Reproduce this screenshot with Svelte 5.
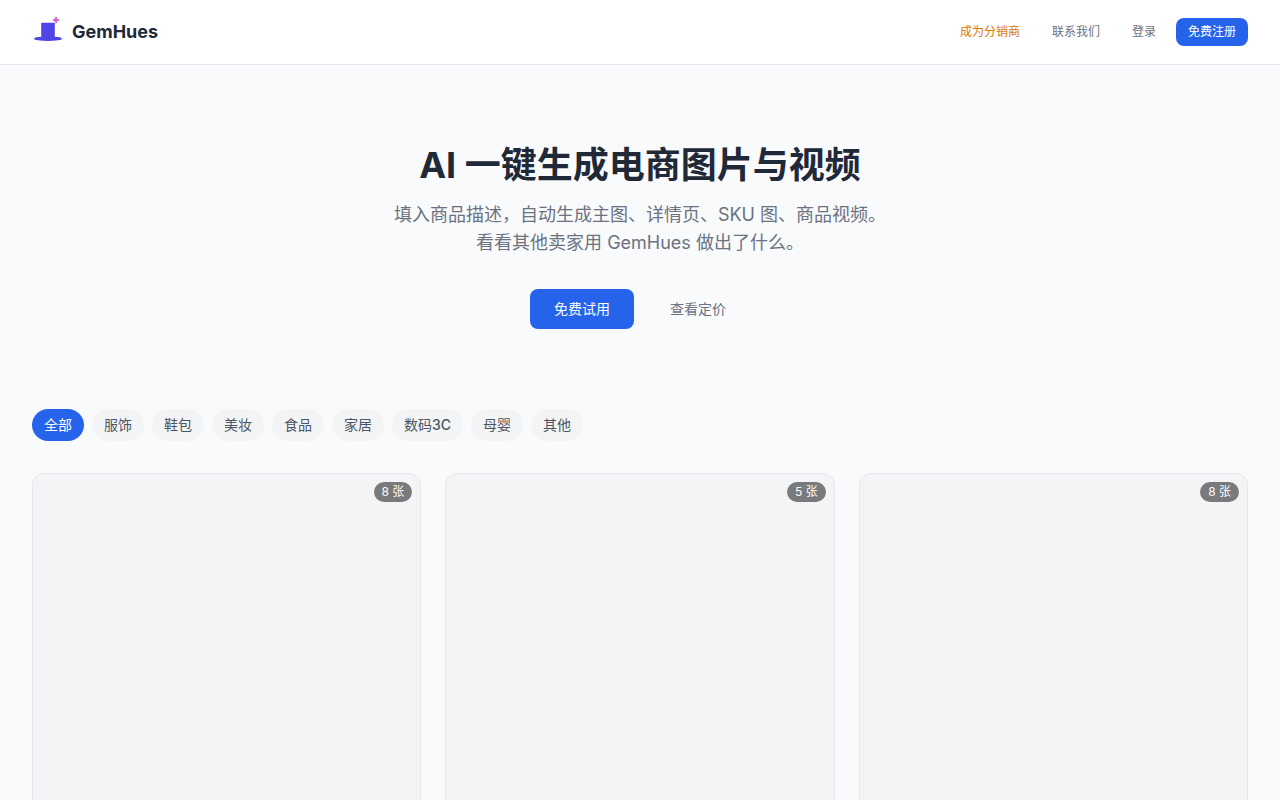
<script>
  const categories = [
    { name: '全部' },
    { name: '服饰' },
    { name: '鞋包' },
    { name: '美妆' },
    { name: '食品' },
    { name: '家居' },
    { name: '数码', suffix: '3C' },
    { name: '母婴' },
    { name: '其他' }
  ];
  const works = [8, 5, 8];
  let active = $state('全部');
</script>

<header class="bar">
  <a class="brand" href="#home">
    <svg class="logo" viewBox="0 0 32 32" aria-hidden="true">
      <ellipse cx="16" cy="22.7" rx="14" ry="2.3" fill="#4f46e5" />
      <rect x="9.2" y="6.8" width="13.6" height="16" rx="0.5" fill="#4f46e5" />
      <path d="M24 .8l.9 2.3 2.3.9-2.3.9-.9 2.3-.9-2.3-2.3-.9 2.3-.9z" fill="#d65fd0" stroke="#d65fd0" stroke-width=".9" stroke-linejoin="round" />
    </svg>
    <span>GemHues</span>
  </a>
  <nav class="nav">
    <a class="partner" href="#partner">成为分销商</a>
    <a href="#contact">联系我们</a>
    <a href="#login">登录</a>
    <a class="primary" href="#register">免费注册</a>
  </nav>
</header>

<main>
  <section class="hero">
    <h1>AI 一键生成电商图片与视频</h1>
    <p>填入商品描述，自动生成主图、详情页、SKU 图、商品视频。<br />看看其他卖家用 GemHues 做出了什么。</p>
    <div class="actions">
      <a class="primary" href="#try">免费试用</a>
      <a href="#pricing">查看定价</a>
    </div>
  </section>

  <section class="gallery">
    <div class="chips">
      {#each categories as { name, suffix }}
        <button type="button" class:active={active === name} aria-pressed={active === name} onclick={() => (active = name)}>{name}{#if suffix}<span class="suffix">{suffix}</span>{/if}</button>
      {/each}
    </div>
    <div class="grid">
      {#each works as count}
        <article class="card">
          <span class="count">{count} 张</span>
        </article>
      {/each}
    </div>
  </section>
</main>

<style>
  :global(body) {
    background: #f9fafc;
    color: #1f2937;
    font-family: Inter, "Noto Sans CJK SC", sans-serif;
    font-size: 14px;
    line-height: 20px;
  }
  a {
    color: #6b7280;
    text-decoration: none;
  }
  .bar {
    display: flex;
    align-items: center;
    justify-content: space-between;
    height: 64px;
    padding: 0 32px;
    background: #fff;
    border-bottom: 1px solid #e5e7eb;
  }
  .brand {
    display: flex;
    align-items: center;
    gap: 8px;
    color: #1f2937;
    font-size: 18px;
    font-weight: 700;
    line-height: 28px;
  }
  .logo {
    width: 32px;
    height: 32px;
  }
  .nav {
    display: flex;
    gap: 8px;
  }
  .nav a {
    padding: 6px 12px;
    border-radius: 8px;
    font-size: 12px;
    line-height: 16px;
  }
  .nav .partner {
    color: #d97706;
  }
  .nav .primary,
  .actions .primary {
    background: #2563eb;
    color: #fff;
  }
  .hero {
    padding: 80px 32px;
    text-align: center;
  }
  h1 {
    margin: 0 0 16px;
    font-size: 36px;
    font-weight: 700;
    line-height: 40px;
  }
  p {
    margin: 0 0 32px;
    color: #6b7280;
    font-size: 18px;
    line-height: 28px;
  }
  .actions {
    display: flex;
    justify-content: center;
    gap: 12px;
  }
  .actions a {
    padding: 10px 24px;
    border-radius: 8px;
  }
  .gallery {
    padding: 0 32px 32px;
  }
  .chips {
    display: flex;
    flex-wrap: wrap;
    gap: 8px;
    margin-bottom: 32px;
  }
  .chips button {
    padding: 6px 12px;
    border: 0;
    border-radius: 16px;
    background: #f3f4f6;
    color: #4b5563;
    font: inherit;
    cursor: pointer;
  }
  .suffix {
    font-weight: 500;
  }
  .chips .active {
    background: #2563eb;
    color: #fff;
  }
  .grid {
    display: grid;
    grid-template-columns: repeat(3, 1fr);
    gap: 24px;
  }
  .card {
    position: relative;
    aspect-ratio: 3 / 4;
    border: 1px solid #e5e7eb;
    border-radius: 12px;
    background: #f3f4f6;
  }
  .count {
    position: absolute;
    top: 8px;
    right: 8px;
    padding: 2px 8px;
    border-radius: 10px;
    background: rgb(0 0 0 / 50%);
    color: #fff;
    font-size: 12px;
    line-height: 16px;
  }
</style>
